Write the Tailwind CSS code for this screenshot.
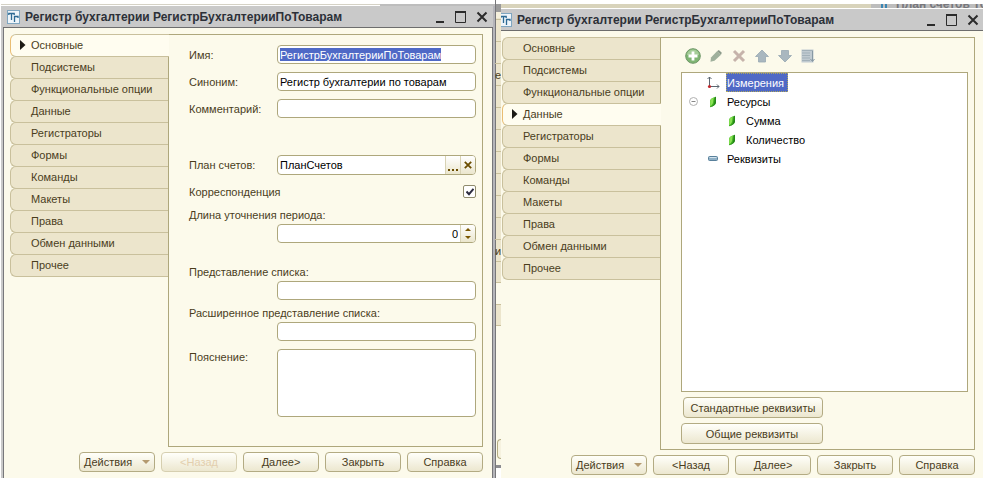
<!DOCTYPE html>
<html lang="ru">
<head>
<meta charset="utf-8">
<title>Регистр бухгалтерии</title>
<script src="https://cdn.jsdelivr.net/npm/@tailwindcss/browser@4"></script>
</head>
<body class="bg-white font-['Liberation_Sans',Arial,sans-serif] text-[11px] leading-[14px] text-[#4a3d1c]">
<svg class="hidden" aria-hidden="true">
  <symbol id="app" viewBox="0 0 13 14"><rect x=".5" y=".5" width="12" height="13" fill="#eef5fa" stroke="#7fa6c0"/><path d="M1.800 5V3.500h5.400V5M4.500 3.500V10" fill="none" stroke="#2c6a94" stroke-width="1.300"/><path d="M11 8V6.500H7.500V12" fill="none" stroke="#2c6a94" stroke-width="1.300"/></symbol>
  <symbol id="min" viewBox="0 0 12 12"><path d="M2 11h8" stroke="#2b2b2b" stroke-width="2"/></symbol>
  <symbol id="max" viewBox="0 0 12 12"><path d="M.5 1v10.500h10V1" fill="none" stroke="#2b2b2b"/><path d="M0 1h11" stroke="#2b2b2b" stroke-width="2"/></symbol>
  <symbol id="close" viewBox="0 0 12 12"><path d="M1.500 1.500l9 9m0-9l-9 9" stroke="#2b2b2b" stroke-width="2"/></symbol>
  <symbol id="tri" viewBox="0 0 6 10"><path d="M0 0l5.500 5L0 10z" fill="#1c1a14"/></symbol>
  <symbol id="caret" viewBox="0 0 8 4"><path d="M0 0h8L4 4z" fill="#b49a70"/></symbol>
  <symbol id="leaf" viewBox="0 0 8 12"><path d="M1 4.500Q2 2 7 .8v6Q6 10 1 11.200z" fill="#3fb021"/><path d="M1.200 4.800Q2 2.500 4.800 1.500L4 7Q3 9.500 1.200 10.500z" fill="#8ae254"/><path d="M7 .8v6Q6 10 1 11.200L4.500 9Q5.500 7 5.800 1.200z" fill="#24851a"/></symbol>
</svg>

<main class="grid min-h-screen grid-cols-[minmax(0,495fr)_6px_minmax(0,482fr)]">

  <!-- Left window: general properties -->
  <section class="flex flex-col pt-1 pl-px">
    <div class="flex h-[2px] justify-end border-t border-[#d5d2c6] bg-white"><span class="-mt-px h-[2px] w-[115px] bg-[#bdbdbd]"></span></div>
    <div class="flex flex-1 flex-col border-x-[2px] border-[#c9c9c9] border-r-[#b5b5ba]">
      <header class="flex h-[22px] shrink-0 items-center border-b border-[#6d6d6d] bg-[#c9c9c9] pr-[5px] pl-1">
        <svg class="h-[14px] w-[13px]"><use href="#app"/></svg>
        <h1 class="flex-1 pl-[5px] text-[12px] font-bold whitespace-nowrap text-[#2c3038]">Регистр бухгалтерии РегистрБухгалтерииПоТоварам</h1>
        <div class="flex gap-[9px] *:block *:h-3 *:w-3">
          <button aria-label="Свернуть"><svg class="size-3"><use href="#min"/></svg></button>
          <button aria-label="Развернуть"><svg class="size-3"><use href="#max"/></svg></button>
          <button aria-label="Закрыть окно"><svg class="size-3"><use href="#close"/></svg></button>
        </div>
      </header>
      <div class="flex flex-1 flex-col border-x border-[#77777a] bg-[#fcfaeb] pt-[6px] pr-[9px] pb-[6px] pl-[6px]">
        <div class="flex flex-1">
          <nav role="tablist" aria-label="Разделы" class="w-[158px] shrink-0 pt-px *:-mt-px *:block *:h-[23px] *:w-full *:rounded-l-md *:border *:border-r-0 *:border-[#c9c09c] *:bg-[#ece5cc] *:pb-px *:pl-5 *:text-left *:whitespace-nowrap">
            <button role="tab" aria-selected="true" class="relative z-10 box-content !w-[138px] !h-[20px] !border-l-[#e9bd73] !bg-[#fffdf0]"><svg class="absolute top-[5px] left-[9px] h-[10px] w-[6px]"><use href="#tri"/></svg>Основные</button>
            <button role="tab">Подсистемы</button>
            <button role="tab">Функциональные опции</button>
            <button role="tab">Данные</button>
            <button role="tab">Регистраторы</button>
            <button role="tab">Формы</button>
            <button role="tab">Команды</button>
            <button role="tab">Макеты</button>
            <button role="tab">Права</button>
            <button role="tab">Обмен данными</button>
            <button role="tab">Прочее</button>
          </nav>
          <form id="props" class="flex flex-1 flex-col border border-[#aea77c] pt-[10px] pr-[6px] pb-[29px] pl-5">
            <div class="grid grid-cols-[88px_minmax(0,1fr)] items-center gap-y-2">
              <label for="name">Имя:</label>
              <div class="flex h-[19px] items-center rounded border border-[#aea77c] bg-white px-[2px]"><input id="name" value="РегистрБухгалтерииПоТоварам" class="field-sizing-content h-[13px] bg-[#4f69c6] text-white outline-none"></div>
              <label for="syn">Синоним:</label>
              <input id="syn" value="Регистр бухгалтерии по товарам" class="h-[19px] rounded border border-[#aea77c] bg-white px-[2px] text-black">
              <label for="comment">Комментарий:</label>
              <input id="comment" class="h-[19px] rounded border border-[#aea77c] bg-white px-[2px] text-black">
            </div>
            <div class="mt-[37px] grid grid-cols-[88px_minmax(0,1fr)] items-center">
              <label for="plan">План счетов:</label>
              <div class="flex h-5 overflow-hidden rounded border border-[#aea77c] bg-white">
                <input id="plan" value="ПланСчетов" class="min-w-0 flex-1 px-[2px] text-black">
                <button type="button" aria-label="Выбрать" class="flex w-[15px] items-end justify-center border-l border-[#d8d2b4] bg-linear-to-b from-white to-[#ebe6cd] pb-[3px]"><svg class="h-[2px] w-[10px]" viewBox="0 0 10 2"><path d="M0 1h2m2 0h2m2 0h2" stroke="#6b4d00" stroke-width="2"/></svg></button>
                <button type="button" aria-label="Очистить" class="flex w-[15px] items-center justify-center border-l border-[#d8d2b4] bg-linear-to-b from-white to-[#ebe6cd]"><svg class="size-2" viewBox="0 0 8 8"><path d="M.8.8l6.400 6.400m0-6.400L.8 7.200" stroke="#6b4d00" stroke-width="1.800"/></svg></button>
              </div>
            </div>
            <div class="mt-[10px] flex h-[13px] items-center justify-between">
              <label for="corr">Корреспонденция</label>
              <div class="relative size-[13px]">
                <input id="corr" type="checkbox" checked class="block size-[13px] appearance-none rounded-xs border border-[#8f8b6c] bg-white">
                <svg class="pointer-events-none absolute top-[3px] left-[3px] size-[8px]" viewBox="0 0 8 8"><path d="M.5 3.500L3 6.200 7.500.8" fill="none" stroke="#2c2c40" stroke-width="2"/></svg>
              </div>
            </div>
            <label for="len" class="mt-[10px]">Длина уточнения периода:</label>
            <div class="mt-[2px] ml-[88px] flex h-[19px] overflow-hidden rounded border border-[#aea77c] bg-white">
              <input id="len" value="0" class="min-w-0 flex-1 px-[2px] text-right text-black">
              <div class="flex w-[15px] flex-col items-center justify-center gap-[5px] border-l border-[#d8d2b4] bg-linear-to-b from-white to-[#ebe6cd]">
                <button type="button" aria-label="Увеличить"><svg class="block h-[3px] w-[6px]" viewBox="0 0 6 3"><path d="M0 3h6L3 0z" fill="#7a5600"/></svg></button>
                <button type="button" aria-label="Уменьшить"><svg class="block h-[3px] w-[6px]" viewBox="0 0 6 3"><path d="M0 0h6L3 3z" fill="#7a5600"/></svg></button>
              </div>
            </div>
            <label for="list" class="mt-[22px]">Представление списка:</label>
            <input id="list" class="mt-[2px] ml-[88px] h-[19px] rounded border border-[#aea77c] bg-white px-[2px] text-black">
            <label for="ext" class="mt-[6px]">Расширенное представление списка:</label>
            <input id="ext" class="mt-[2px] ml-[88px] h-[19px] rounded border border-[#aea77c] bg-white px-[2px] text-black">
            <div class="mt-2 grid flex-1 grid-cols-[88px_minmax(0,1fr)]">
              <label for="note" class="pt-[1px]">Пояснение:</label>
              <textarea id="note" class="block h-full min-h-[40px] resize-none rounded border border-[#aea77c] bg-white px-[2px] text-black"></textarea>
            </div>
          </form>
        </div>
        <footer class="mt-[5px] flex justify-end gap-[6px] *:h-5 *:w-[76px] *:rounded *:border *:border-[#b3ab83] *:bg-linear-to-b *:from-[#fffffa] *:to-[#ece7cf]">
          <button class="flex items-center justify-between px-1">Действия<svg class="h-1 w-2"><use href="#caret"/></svg></button>
          <button disabled class="!border-[#d6cfb0] text-[#e3cfae]">&lt;Назад</button>
          <button>Далее&gt;</button>
          <button>Закрыть</button>
          <button>Справка</button>
        </footer>
      </div>
    </div>
  </section>

  <!-- Sliver of the window lying behind -->
  <div class="flex flex-col border-l border-[#77777a] bg-[#fcfaeb]" aria-hidden="true">
    <div class="h-1 shrink-0 bg-white"></div>
    <div class="h-2 shrink-0 bg-[#9a9a9a]"></div>
    <div class="h-[6px] shrink-0 bg-[#f5f0dc]"></div>
    <div class="h-[264px] shrink-0 bg-[#ece5cc] pt-px *:h-[22px] *:border-t *:border-[#c9c09c]">
      <div></div><div></div><div class="-ml-px flex items-center">е</div><div></div><div></div><div></div><div></div><div></div><div></div><div></div><div class="-ml-px flex items-center">и</div><div></div>
    </div>
    <div class="h-[22px] shrink-0 border-t border-[#c9c09c]"></div>
    <div class="h-[22px] shrink-0 border-y border-[#c9c09c] bg-[#ece5cc]"></div>
    <div class="h-[113px] shrink-0"></div>
    <div class="ml-px h-5 shrink-0 rounded-l border border-r-0 border-[#b3ab83] bg-[#f6f2df]"></div>
    <div class="mt-[6px] h-[3px] shrink-0 bg-[#8c8c90]"></div>
    <div class="flex-1 bg-white"></div>
  </div>

  <!-- Right window: data -->
  <section class="flex flex-col pt-1">
    <div class="flex h-1 shrink-0 justify-end bg-[#d8d3bb]"><span class="flex h-1 w-[112px] items-end gap-[9px] overflow-hidden bg-[#bdbdbd] pl-[10px] text-[12px] leading-[8px] font-bold whitespace-nowrap text-[#77777c]"><i class="h-1 w-[6px] shrink-0 border-x-2 border-[#3a86b4]"></i>План счетов То</span></div>
    <header class="flex h-[23px] shrink-0 items-center border-t border-b border-t-white border-b-[#6d6d6d] bg-[#c9c9c9] pt-px pr-1">
      <svg class="h-[14px] w-[11px]" viewBox="2 0 11 14"><use href="#app" width="13" height="14"/></svg>
      <h1 class="flex-1 pl-[5px] text-[12px] font-bold whitespace-nowrap text-[#2c3038]">Регистр бухгалтерии РегистрБухгалтерииПоТоварам</h1>
      <div class="flex gap-[9px] *:block *:h-3 *:w-3">
        <button aria-label="Свернуть"><svg class="size-3"><use href="#min"/></svg></button>
        <button aria-label="Развернуть"><svg class="size-3"><use href="#max"/></svg></button>
        <button aria-label="Закрыть окно"><svg class="size-3"><use href="#close"/></svg></button>
      </div>
    </header>
    <div class="flex flex-1 flex-col bg-[#fcfaeb] pt-[6px] pr-2 pb-[3px] pl-px">
      <div class="flex flex-1">
        <nav role="tablist" aria-label="Разделы" class="w-[158px] shrink-0 pt-px *:-mt-px *:block *:h-[23px] *:w-full *:rounded-l-md *:border *:border-r-0 *:border-[#c9c09c] *:bg-[#ece5cc] *:pb-px *:pl-5 *:text-left *:whitespace-nowrap">
          <button role="tab">Основные</button>
          <button role="tab">Подсистемы</button>
          <button role="tab">Функциональные опции</button>
          <button role="tab" aria-selected="true" class="relative z-10 box-content !w-[138px] !h-[20px] !border-l-[#e9bd73] !bg-[#fffdf0]"><svg class="absolute top-[5px] left-[9px] h-[10px] w-[6px]"><use href="#tri"/></svg>Данные</button>
          <button role="tab">Регистраторы</button>
          <button role="tab">Формы</button>
          <button role="tab">Команды</button>
          <button role="tab">Макеты</button>
          <button role="tab">Права</button>
          <button role="tab">Обмен данными</button>
          <button role="tab">Прочее</button>
        </nav>
        <div class="flex flex-1 flex-col border border-[#aea77c] pt-[10px] pr-[6px] pb-[5px] pl-5">
          <div role="toolbar" aria-label="Действия с данными" class="flex h-4 gap-[7px] pl-1 *:size-4">
            <button aria-label="Добавить"><svg class="size-4" viewBox="0 0 16 16"><circle cx="8" cy="8" r="7.300" fill="#7fb573" stroke="#6f9668"/><path d="M2 7a6 5.500 0 0 1 12 0z" fill="#a5cd98"/><path d="M8 3.500v9M3.500 8h9" stroke="#fff" stroke-width="2.800"/></svg></button>
            <button aria-label="Изменить"><svg class="size-4" viewBox="0 0 16 16"><path d="M2.500 13.800l.5-4.300L9 3.200l4 3.600-6.500 6z" fill="#9fb09c"/><path d="M9 3.200l1.800-1.200 3 2.800L13 6.800z" fill="#8c9a8a"/></svg></button>
            <button aria-label="Удалить"><svg class="size-4" viewBox="0 0 16 16"><path d="M3 3l10 10m0-10l-10 10" stroke="#c6b3ab" stroke-width="3"/></svg></button>
            <button aria-label="Вверх"><svg class="size-4" viewBox="0 0 16 16"><path d="M8 2l6.500 6.500h-3V14h-7V8.500h-3z" fill="#a9b7bf" stroke="#98a8b2" stroke-width=".8"/></svg></button>
            <button aria-label="Вниз"><svg class="size-4" viewBox="0 0 16 16"><path d="M8 14l6.500-6.500h-3V2.500h-7v5h-3z" fill="#a9b7bf" stroke="#98a8b2" stroke-width=".8"/></svg></button>
            <button aria-label="Сортировать"><svg class="size-4" viewBox="0 0 16 16"><path d="M1.500 1.500h12v13h-12z" fill="#c0cad0"/><path d="M2 2.500h11M2 5h8M2 7.500h8M2 10h8M2 12.500h8" stroke="#a3b1b9"/><path d="M12.500 3v10m-2-2l2 2.500 2-2.500" fill="none" stroke="#8798a3"/></svg></button>
          </div>
          <ul role="tree" aria-label="Данные регистра" class="mt-2 min-h-[200px] flex-1 border border-[#aea77c] bg-white text-black *:flex *:h-[19px] *:items-center">
            <li role="treeitem" aria-selected="true" class="pl-[25px]"><svg class="h-[13px] w-[13px]" viewBox="0 0 13 13"><path d="M2.500 11V1M.5 3l2-2 2 2M3 10.500h9M10 8.500l2 2-2 2" fill="none" stroke="#5b6670"/><circle cx="2.500" cy="10.500" r="1.600" fill="#c2262b"/></svg><span class="ml-[6px] flex h-[19px] items-center border border-dotted border-[#b0a85a] bg-[#4f69c6] pr-[3px] text-white">Измерения</span></li>
            <li role="treeitem" aria-expanded="true" class="pl-[7px]"><svg class="size-[9px]" viewBox="0 0 9 9"><circle cx="4.500" cy="4.500" r="4" fill="#fff" stroke="#b0b0b0"/><path d="M2.500 4.500h4" stroke="#888"/></svg><svg class="ml-[11px] h-3 w-2"><use href="#leaf"/></svg><span class="ml-[10px]">Ресурсы</span></li>
            <li role="treeitem" aria-level="2" class="pl-[46px]"><svg class="h-3 w-2"><use href="#leaf"/></svg><span class="ml-[10px]">Сумма</span></li>
            <li role="treeitem" aria-level="2" class="pl-[46px]"><svg class="h-3 w-2"><use href="#leaf"/></svg><span class="ml-[10px]">Количество</span></li>
            <li role="treeitem" class="pl-[26px]"><svg class="h-[5px] w-[10px]" viewBox="0 0 10 5"><rect x=".5" y=".5" width="9" height="4" rx="1" fill="#8fb0c6" stroke="#58809b"/><path d="M1.500 1.500h7" stroke="#d3e3ed"/></svg><span class="ml-[9px]">Реквизиты</span></li>
          </ul>
          <div class="mt-[5px] flex w-[142px] flex-col items-end gap-[5px] *:h-[21px] *:rounded *:border *:border-[#b3ab83] *:bg-linear-to-b *:from-[#fffffa] *:to-[#ece7cf] *:whitespace-nowrap">
            <button class="w-[140px]">Стандартные реквизиты</button>
            <button class="w-full">Общие реквизиты</button>
          </div>
        </div>
      </div>
      <footer class="mt-[5px] flex justify-end gap-[6px] *:h-5 *:w-[76px] *:rounded *:border *:border-[#b3ab83] *:bg-linear-to-b *:from-[#fffffa] *:to-[#ece7cf]">
        <button class="flex items-center justify-between px-1">Действия<svg class="h-1 w-2"><use href="#caret"/></svg></button>
        <button>&lt;Назад</button>
        <button>Далее&gt;</button>
        <button>Закрыть</button>
        <button>Справка</button>
      </footer>
    </div>
  </section>
</main>
</body>
</html>
